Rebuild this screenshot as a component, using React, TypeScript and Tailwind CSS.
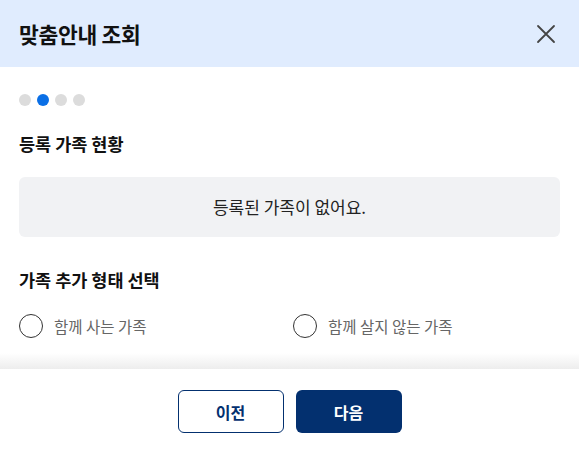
import { useState } from "react";

const FONT = { fontFamily: '"Noto Sans CJK KR", "Noto Sans", sans-serif' };

type Kind = "together" | "apart" | null;

export default function App() {
  const [kind, setKind] = useState<Kind>(null);
  const step = 1;

  const options: Array<{ id: Exclude<Kind, null>; label: string }> = [
    { id: "together", label: "함께 사는 가족" },
    { id: "apart", label: "함께 살지 않는 가족" },
  ];

  return (
    <div className="w-[579px] h-[450px] bg-white flex flex-col overflow-hidden" style={FONT}>
      {/* 헤더 */}
      <div className="h-[67px] shrink-0 bg-[#e0ecfe] flex items-center justify-between pl-[19px] pr-[22px]">
        <h1 className="text-[21.5px] leading-[28px] font-bold text-[#111] tracking-[-0.3px]">맞춤안내 조회</h1>
        <button className="w-[22px] h-[22px] flex items-center justify-center" aria-label="닫기">
          <svg width="20" height="20" viewBox="0 0 20 20" fill="none">
            <path d="M2 2 L18 18 M18 2 L2 18" stroke="#444" strokeWidth="1.8" strokeLinecap="round" />
          </svg>
        </button>
      </div>

      <div className="flex-1 px-[19px]">
        <div className="mt-[27px] flex gap-[6px]">
          {[0, 1, 2, 3].map((i) => (
            <span
              key={i}
              className={i === step ? "w-[12px] h-[12px] rounded-full bg-[#0a6fe6]" : "w-[12px] h-[12px] rounded-full bg-[#dcdcdc]"}
            />
          ))}
        </div>

        <h2 className="mt-[26px] text-[17.5px] leading-[24px] font-bold text-[#111]">등록 가족 현황</h2>
        <div className="mt-[21px] h-[60px] rounded-[6px] bg-[#f1f2f4] flex items-center justify-center text-[17px] text-[#222]">
          등록된 가족이 없어요.
        </div>

        <h2 className="mt-[31px] text-[17.5px] leading-[24px] font-bold text-[#111]">가족 추가 형태 선택</h2>
        <div className="mt-[22px] grid grid-cols-[274px_1fr]">
          {options.map((o) => (
            <label key={o.id} className="flex items-center gap-[11px] cursor-pointer" onClick={() => setKind(o.id)}>
              <span className="w-[24px] h-[24px] rounded-full border border-[#333] flex items-center justify-center">
                {kind === o.id && <span className="w-[12px] h-[12px] rounded-full bg-[#03306f]" />}
              </span>
              <span className="text-[15.5px] leading-[24px] text-[#666]">{o.label}</span>
            </label>
          ))}
        </div>
      </div>

      <div className="h-[16px] shrink-0 bg-gradient-to-b from-white to-[#ededed]" />
      <div className="h-[81px] shrink-0 flex justify-center gap-[12px] pt-[21px]">
        <button className="w-[106px] h-[43px] rounded-[6px] border border-[#03306f] bg-white text-[#03306f] text-[16px] font-bold">
          이전
        </button>
        <button className="w-[106px] h-[43px] rounded-[6px] bg-[#03306f] text-white text-[16px] font-bold">
          다음
        </button>
      </div>
    </div>
  );
}
